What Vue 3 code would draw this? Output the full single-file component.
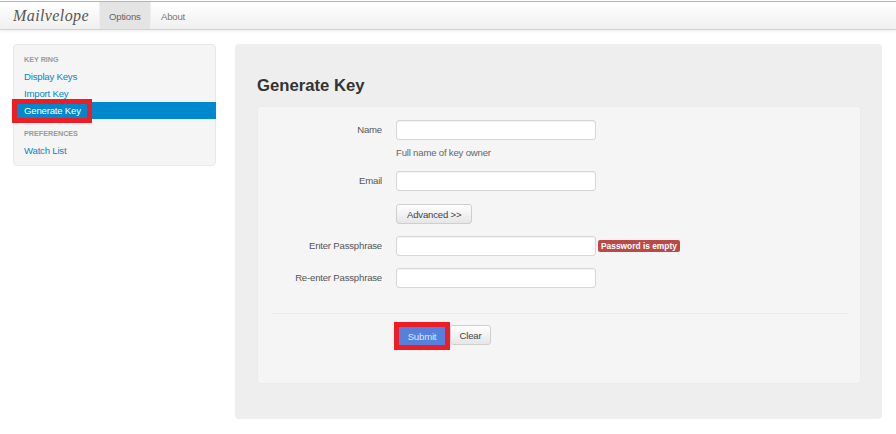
<template>
  <div class="page">
    <div class="navbar">
      <a class="brand">Mailvelope</a>
      <a class="tab active">Options</a>
      <a class="tab">About</a>
    </div>

    <div class="content">
      <div class="sidebar">
        <div class="nav-header">KEY RING</div>
        <a class="link">Display Keys</a>
        <a class="link">Import Key</a>
        <a class="link selected">
          Generate Key
          <span class="marker"></span>
        </a>
        <div class="nav-header second">PREFERENCES</div>
        <a class="link">Watch List</a>
      </div>

      <div class="main">
        <h3>Generate Key</h3>
        <div class="panel">
          <div class="row">
            <label>Name</label>
            <input type="text" />
          </div>
          <div class="help">Full name of key owner</div>
          <div class="row email">
            <label>Email</label>
            <input type="text" />
          </div>
          <div class="row advanced">
            <button class="btn">Advanced &gt;&gt;</button>
          </div>
          <div class="row pass">
            <label>Enter Passphrase</label>
            <input type="text" />
            <span class="badge">Password is empty</span>
          </div>
          <div class="row repass">
            <label>Re-enter Passphrase</label>
            <input type="text" />
          </div>
          <div class="actions">
            <button class="submit">Submit</button>
            <button class="btn clear">Clear</button>
          </div>
        </div>
      </div>
    </div>
  </div>
</template>

<script setup>
</script>

<style>
html, body {
  margin: 0;
  background: #fff;
}
</style>

<style scoped>
.page {
  width: 896px;
  height: 434px;
  overflow: hidden;
  font-family: "Liberation Sans", Arial, sans-serif;
  font-size: 9.6px;
  letter-spacing: -0.2px;
  color: #444;
}
.navbar {
  display: flex;
  height: 27px;
  margin-top: 1px;
  border-top: 1px solid #b4b4b4;
  border-bottom: 1px solid #d2d2d2;
  background: linear-gradient(#ffffff, #f0f0f0);
  box-shadow: 0 1px 3px rgba(0, 0, 0, 0.08);
}
.brand {
  width: 86px;
  padding-left: 13px;
  line-height: 27px;
  font-family: "Liberation Serif", serif;
  font-style: italic;
  font-size: 16px;
  letter-spacing: 0.4px;
  color: #555;
}
.tab {
  padding: 0 10px;
  line-height: 29px;
  color: #777;
}
.tab.active {
  box-sizing: border-box;
  width: 52px;
  background: #e4e4e4;
  color: #666;
  border-left: 1px solid #eee;
  border-right: 1px solid #eee;
  padding: 0 0 0 9px;
}
.content {
  display: flex;
  align-items: flex-start;
  padding: 14px 14px 0 13px;
}
.sidebar {
  box-sizing: border-box;
  width: 203px;
  height: 122px;
  padding: 8px 0;
  background: #f5f5f5;
  border: 1px solid #e8e8e8;
  border-radius: 4px;
}
.nav-header {
  padding-left: 10px;
  height: 15px;
  line-height: 13px;
  font-size: 7.2px;
  letter-spacing: 0;
  font-weight: bold;
  color: #999;
}
.nav-header.second {
  margin-top: 8px;
}
.link {
  display: block;
  position: relative;
  height: 17px;
  line-height: 18px;
  padding-left: 10px;
  color: #0088cc;
}
.link.selected {
  margin-right: -1px;
  background: #0088cc;
  color: #fff;
}
.marker {
  position: absolute;
  left: -2px;
  top: -3px;
  width: 70px;
  height: 14px;
  border: 5px solid #ee1c25;
}
.main {
  box-sizing: border-box;
  width: 647px;
  height: 375px;
  margin-left: 19px;
  padding: 32px 22px 0;
  background: #eeeeee;
  border-radius: 4px;
}
h3 {
  margin: 0 0 10px;
  height: 20px;
  line-height: 20px;
  font-size: 16.7px;
  letter-spacing: 0;
  font-weight: bold;
  color: #333;
}
.panel {
  box-sizing: border-box;
  width: 604px;
  height: 278px;
  padding-top: 13px;
  background: #f5f5f5;
  border: 1px solid #ebebeb;
  border-radius: 3px;
}
.row {
  display: flex;
  align-items: center;
  height: 20px;
}
.row label {
  width: 124px;
  margin-right: 14px;
  padding-bottom: 2px;
  text-align: right;
  color: #555;
}
.row input {
  box-sizing: border-box;
  width: 200px;
  height: 20px;
  padding: 0 4px;
  background: #fff;
  border: 1px solid #d6d6d6;
  border-radius: 3px;
  box-shadow: inset 0 1px 1px rgba(0, 0, 0, 0.05);
}
.help {
  margin: 7px 0 0 138px;
  height: 12px;
  line-height: 12px;
  color: #666;
}
.row.email {
  margin-top: 12px;
}
.row.advanced {
  margin-top: 13px;
  padding-left: 138px;
}
.row.pass {
  margin-top: 12px;
}
.row.repass {
  margin-top: 12px;
}
.btn {
  box-sizing: border-box;
  height: 20px;
  padding: 0 10px;
  font-family: inherit;
  font-size: 9.6px;
  letter-spacing: -0.2px;
  color: #444;
  background: linear-gradient(#ffffff, #e6e6e6);
  border: 1px solid #cfcfcf;
  border-radius: 3px;
}
.badge {
  margin-left: 2px;
  padding: 0 3px;
  height: 12px;
  line-height: 12px;
  font-size: 8.4px;
  letter-spacing: 0;
  font-weight: bold;
  color: #fff;
  background: #b94a48;
  border-radius: 2px;
}
.actions {
  display: flex;
  align-items: flex-end;
  margin: 25px 12px 0 13px;
  padding: 11px 0 0 128px;
  border-top: 1px solid #ebebeb;
}
.submit {
  box-sizing: border-box;
  width: 46px;
  height: 18px;
  margin-right: 5px;
  padding: 0;
  font-family: inherit;
  font-size: 9.6px;
  letter-spacing: -0.2px;
  color: #dfe7f7;
  background: #5580de;
  border: none;
  outline: 5px solid #ee1c25;
}
.clear {
  width: 41px;
  padding: 0;
}
</style>
